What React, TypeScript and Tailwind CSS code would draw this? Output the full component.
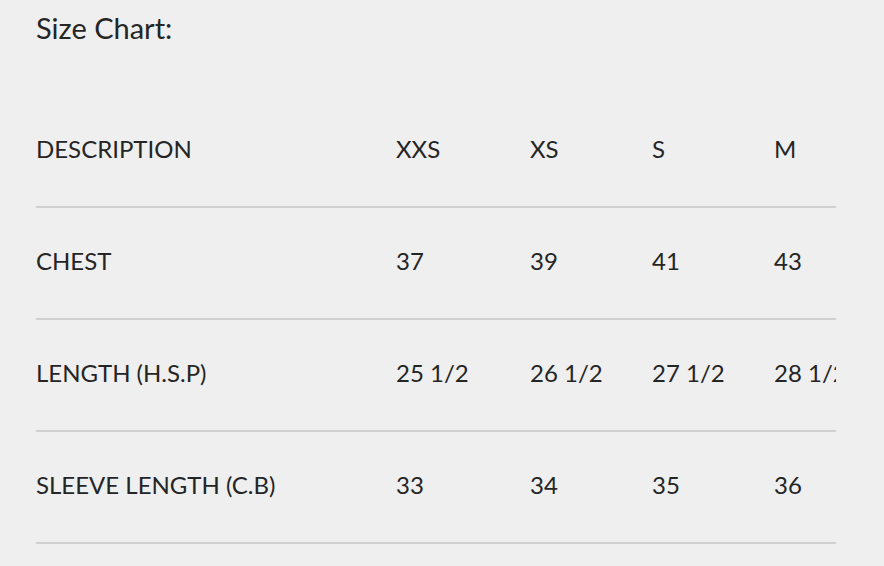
const sizes = ['XXS', 'XS', 'S', 'M'];

const rows = [
  { label: 'CHEST', values: ['37', '39', '41', '43'] },
  { label: 'LENGTH (H.S.P)', values: ['25 1/2', '26 1/2', '27 1/2', '28 1/2'] },
  { label: 'SLEEVE LENGTH (C.B)', values: ['33', '34', '35', '36'] },
];

const colWidths = ['w-[360px]', 'w-[134px]', 'w-[122px]', 'w-[122px]', 'w-[122px]'];

export default function App() {
  return (
    <div className="min-h-[566px] bg-[#efefef] text-[#252525] px-[36px] font-['Lato','Open_Sans',sans-serif]">
      <h2 className="pt-[10px] text-[29px] leading-[36px]">Size Chart:</h2>

      {/* tableau des tailles, coupé à droite comme dans un conteneur à défilement */}
      <div className="mt-[49px] w-[800px] overflow-hidden">
        <table className="border-collapse table-fixed w-[860px] text-[24px] leading-[30px]">
          <thead>
            <tr className="h-[112px] border-b-2 border-[#d0d0d0]">
              <th className={`${colWidths[0]} pb-[4px] text-left font-normal`}>DESCRIPTION</th>
              {sizes.map((s, i) => (
                <th key={s} className={`${colWidths[i + 1]} pb-[4px] text-left font-normal`}>{s}</th>
              ))}
            </tr>
          </thead>
          <tbody>
            {rows.map((row) => (
              <tr key={row.label} className="h-[112px] border-b-2 border-[#d0d0d0]">
                <td className="pb-[4px] whitespace-nowrap">{row.label}</td>
                {row.values.map((v, i) => (
                  <td key={i} className="pb-[4px] whitespace-nowrap">{v}</td>
                ))}
              </tr>
            ))}
          </tbody>
        </table>
      </div>
    </div>
  );
}
